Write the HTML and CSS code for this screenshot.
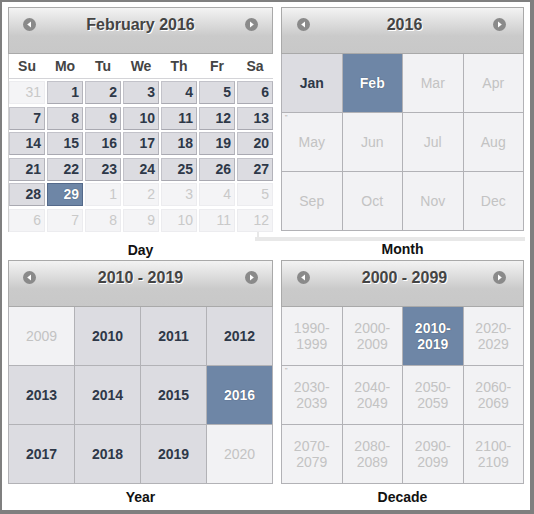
FILE: index.html
```html
<!DOCTYPE html>
<html>
<head>
<meta charset="utf-8">
<link rel="stylesheet" href="styles.css">
</head>
<body>
<div class="frame">
  <div class="board">
    <section class="slot top">
      <div class="cal">
        <div class="cal-head">
          <svg class="nav" viewBox="0 0 13 13"><circle cx="6.5" cy="6.5" r="6.5" fill="#8a8a8a"/><polygon points="8,3.6 8,9.4 4.2,6.5" fill="#fff"/></svg>
          <span class="title">February 2016</span>
          <svg class="nav" viewBox="0 0 13 13"><circle cx="6.5" cy="6.5" r="6.5" fill="#8a8a8a"/><polygon points="5,3.6 5,9.4 8.8,6.5" fill="#fff"/></svg>
        </div>
        <div class="dow"><span>Su</span><span>Mo</span><span>Tu</span><span>We</span><span>Th</span><span>Fr</span><span>Sa</span></div>
        <div class="days">
          <span class="d off">31</span><span class="d">1</span><span class="d">2</span><span class="d">3</span><span class="d">4</span><span class="d">5</span><span class="d">6</span>
          <span class="d">7</span><span class="d">8</span><span class="d">9</span><span class="d">10</span><span class="d">11</span><span class="d">12</span><span class="d">13</span>
          <span class="d">14</span><span class="d">15</span><span class="d">16</span><span class="d">17</span><span class="d">18</span><span class="d">19</span><span class="d">20</span>
          <span class="d">21</span><span class="d">22</span><span class="d">23</span><span class="d">24</span><span class="d">25</span><span class="d">26</span><span class="d">27</span>
          <span class="d">28</span><span class="d sel">29</span><span class="d off">1</span><span class="d off">2</span><span class="d off">3</span><span class="d off">4</span><span class="d off">5</span>
          <span class="d off">6</span><span class="d off">7</span><span class="d off">8</span><span class="d off">9</span><span class="d off">10</span><span class="d off">11</span><span class="d off">12</span>
        </div>
      </div>
      <div class="caption cap-top">Day</div>
    </section>

    <section class="slot top">
      <div class="cal">
        <div class="cal-head head-right">
          <svg class="nav" viewBox="0 0 13 13"><circle cx="6.5" cy="6.5" r="6.5" fill="#8a8a8a"/><polygon points="8,3.6 8,9.4 4.2,6.5" fill="#fff"/></svg>
          <span class="title">2016</span>
          <svg class="nav" viewBox="0 0 13 13"><circle cx="6.5" cy="6.5" r="6.5" fill="#8a8a8a"/><polygon points="5,3.6 5,9.4 8.8,6.5" fill="#fff"/></svg>
        </div>
        <div class="grid">
          <span class="c on">Jan</span><span class="c sel">Feb</span><span class="c">Mar</span><span class="c">Apr</span>
          <span class="c mark">May</span><span class="c">Jun</span><span class="c">Jul</span><span class="c">Aug</span>
          <span class="c">Sep</span><span class="c">Oct</span><span class="c">Nov</span><span class="c">Dec</span>
        </div>
      </div>
      <div class="shadow-bar"></div>
      <div class="caption">Month</div>
    </section>

    <section class="slot">
      <div class="cal">
        <div class="cal-head">
          <svg class="nav" viewBox="0 0 13 13"><circle cx="6.5" cy="6.5" r="6.5" fill="#8a8a8a"/><polygon points="8,3.6 8,9.4 4.2,6.5" fill="#fff"/></svg>
          <span class="title">2010 - 2019</span>
          <svg class="nav" viewBox="0 0 13 13"><circle cx="6.5" cy="6.5" r="6.5" fill="#8a8a8a"/><polygon points="5,3.6 5,9.4 8.8,6.5" fill="#fff"/></svg>
        </div>
        <div class="grid">
          <span class="c">2009</span><span class="c on">2010</span><span class="c on">2011</span><span class="c on">2012</span>
          <span class="c on">2013</span><span class="c on">2014</span><span class="c on">2015</span><span class="c sel">2016</span>
          <span class="c on">2017</span><span class="c on">2018</span><span class="c on">2019</span><span class="c">2020</span>
        </div>
      </div>
      <div class="caption cap-bottom">Year</div>
    </section>

    <section class="slot">
      <div class="cal">
        <div class="cal-head head-right">
          <svg class="nav" viewBox="0 0 13 13"><circle cx="6.5" cy="6.5" r="6.5" fill="#8a8a8a"/><polygon points="8,3.6 8,9.4 4.2,6.5" fill="#fff"/></svg>
          <span class="title">2000 - 2099</span>
          <svg class="nav" viewBox="0 0 13 13"><circle cx="6.5" cy="6.5" r="6.5" fill="#8a8a8a"/><polygon points="5,3.6 5,9.4 8.8,6.5" fill="#fff"/></svg>
        </div>
        <div class="grid decade">
          <span class="c">1990-<br>1999</span><span class="c">2000-<br>2009</span><span class="c sel">2010-<br>2019</span><span class="c">2020-<br>2029</span>
          <span class="c mark">2030-<br>2039</span><span class="c">2040-<br>2049</span><span class="c">2050-<br>2059</span><span class="c">2060-<br>2069</span>
          <span class="c">2070-<br>2079</span><span class="c">2080-<br>2089</span><span class="c">2090-<br>2099</span><span class="c">2100-<br>2109</span>
        </div>
      </div>
      <div class="caption cap-bottom">Decade</div>
    </section>
  </div>
</div>
</body>
</html>
```

FILE: styles.css
```css
* { box-sizing: border-box; }

html, body {
  margin: 0;
  padding: 0;
  background: #ffffff;
}

body {
  font-family: "Liberation Sans", Arial, sans-serif;
  color: #333;
}

.frame {
  width: 534px;
  height: 514px;
  border-style: solid;
  border-color: #7f7f7f;
  border-width: 2px 4px 4px 2px;
  padding: 5px 0 0 6px;
  background: #fff;
}

.board {
  display: grid;
  grid-template-columns: 265px 243px;
  grid-template-rows: 253px auto;
  column-gap: 8px;
}

.slot {
  display: flex;
  flex-direction: column;
}

.cal {
  display: flex;
  flex-direction: column;
}

.cal-head {
  height: 47px;
  border: 1px solid #a9a9a9;
  background: linear-gradient(to bottom, #f3f3f3 0%, #dcdcdc 35%, #cacaca 62%, #c8c8c8 100%);
  display: flex;
  align-items: center;
  align-self: stretch;
  padding: 1px 14px 13px;
}

.head-right {
  padding-left: 15px;
  padding-right: 17px;
}

.head-right .title {
  padding-left: 6px;
}

.nav {
  width: 13px;
  height: 13px;
  flex: none;
}

.title {
  flex: 1;
  text-align: center;
  font-size: 16px;
  font-weight: bold;
  line-height: 18px;
  color: #444;
  text-shadow: 1px 1px 0 #fff;
}

/* Day view */
.dow {
  height: 25px;
  display: grid;
  grid-template-columns: repeat(7, 1fr);
  column-gap: 2px;
  align-items: center;
  background: #fff;
  border-left: 1px solid #c8c8c8;
  border-bottom: 1px solid #d4d4d8;
}

.dow span {
  text-align: center;
  font-size: 14px;
  font-weight: bold;
  color: #444;
}

.days {
  display: grid;
  grid-template-columns: repeat(7, 1fr);
  grid-auto-rows: 23px;
  column-gap: 2px;
  row-gap: 2.6px;
  padding-top: 2px;
  border-left: 1px solid #d0d0d0;
}

.d {
  background: #dcdce1;
  border: 1px solid #c2c2c9;
  border-bottom-color: #a9a9b1;
  border-right-color: #b4b4bb;
  text-align: right;
  padding-right: 3px;
  font-size: 14px;
  line-height: 21px;
  font-weight: bold;
  color: #2e3848;
}

.d.off {
  background: #f4f4f6;
  border-color: #ececef;
  color: #c9c9c9;
  font-weight: normal;
}

.d.sel {
  background: #6e86a6;
  border-color: #54698a;
  color: #fff;
  text-shadow: 0 0 1px #2b3a50;
}

/* Grid views */
.grid {
  display: grid;
  grid-template-columns: repeat(4, 1fr);
  grid-auto-rows: 58px;
  gap: 1px;
  background: #b2b2b6;
  border: 1px solid #b2b2b6;
  border-top: none;
}

.c {
  position: relative;
  display: flex;
  align-items: center;
  justify-content: center;
  text-align: center;
  background: #f2f2f4;
  color: #c3c3c3;
  font-size: 14px;
  line-height: 16px;
}

.c.on {
  background: #dcdce1;
  color: #2e3848;
  font-weight: bold;
}

.c.sel {
  background: #6e86a6;
  color: #fff;
  font-weight: bold;
  text-shadow: 0 0 1px #2b3a50;
}

.c.mark::before {
  content: "\"";
  position: absolute;
  top: 1px;
  left: 3px;
  font-size: 7px;
  line-height: 7px;
  color: #a8a8a8;
}

.shadow-bar {
  height: 4px;
  margin: 6px -1px 0 -26px;
  background: #e8e8e8;
  position: relative;
}

.shadow-bar::before {
  content: "";
  position: absolute;
  left: 2px;
  bottom: 0;
  width: 2px;
  height: 9px;
  background: #e8e8e8;
}

.caption {
  text-align: center;
  font-size: 14px;
  font-weight: bold;
  line-height: 17px;
  color: #111;
}

.cap-top {
  margin-top: 10px;
}

.cap-bottom {
  margin-top: 5px;
}
```
